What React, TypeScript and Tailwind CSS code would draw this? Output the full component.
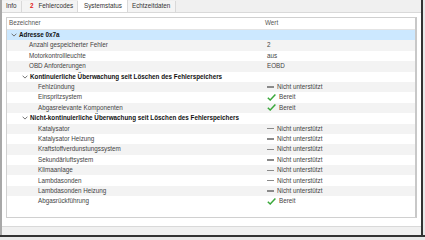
import React from "react";

type Row = {
  label: string;
  level: number;
  kind: "group" | "leaf";
  value?: string;
  status?: "ok" | "na";
  selected?: boolean;
};

const rows: Row[] = [
  { label: "Adresse 0x7a", level: 0, kind: "group", selected: true },
  { label: "Anzahl gespeicherter Fehler", level: 1, kind: "leaf", value: "2" },
  { label: "Motorkontrollleuchte", level: 1, kind: "leaf", value: "aus" },
  { label: "OBD Anforderungen", level: 1, kind: "leaf", value: "EOBD" },
  { label: "Kontinuierliche Überwachung seit Löschen des Fehlerspeichers", level: 1, kind: "group" },
  { label: "Fehlzündung", level: 2, kind: "leaf", status: "na" },
  { label: "Einspritzsystem", level: 2, kind: "leaf", status: "ok" },
  { label: "Abgasrelevante Komponenten", level: 2, kind: "leaf", status: "ok" },
  { label: "Nicht-kontinuierliche Überwachung seit Löschen des Fehlerspeichers", level: 1, kind: "group" },
  { label: "Katalysator", level: 2, kind: "leaf", status: "na" },
  { label: "Katalysator Heizung", level: 2, kind: "leaf", status: "na" },
  { label: "Kraftstoffverdunstungssystem", level: 2, kind: "leaf", status: "na" },
  { label: "Sekundärluftsystem", level: 2, kind: "leaf", status: "na" },
  { label: "Klimaanlage", level: 2, kind: "leaf", status: "na" },
  { label: "Lambdasonden", level: 2, kind: "leaf", status: "na" },
  { label: "Lambdasonden Heizung", level: 2, kind: "leaf", status: "na" },
  { label: "Abgasrückführung", level: 2, kind: "leaf", status: "ok" },
];

function Chevron() {
  return (
    <svg width="6" height="4" viewBox="0 0 6 4" className="shrink-0">
      <path d="M0.6 0.7 L3 3.1 L5.4 0.7" fill="none" stroke="#666" strokeWidth="0.9" />
    </svg>
  );
}

function Check() {
  return (
    <svg width="9" height="7" viewBox="0 0 9 7" className="shrink-0">
      <path d="M0.8 3.8 L3.2 6 L8.4 0.6" fill="none" stroke="#3aa83a" strokeWidth="1.5" />
    </svg>
  );
}

function Dash() {
  return <div className="w-[7px] h-[1.5px] bg-[#8a8a8a] shrink-0" />;
}

function TableRow({ r, i }: { r: Row; i: number }) {
  const bg = r.selected ? "bg-[#cce8ff]" : i % 2 === 1 ? "bg-[#f3f3f3]" : "bg-white";
  const labelPad =
    r.kind === "group"
      ? r.level === 0
        ? "pl-[4px]"
        : "pl-[15px]"
      : r.level === 1
      ? "pl-[22px]"
      : "pl-[31px]";
  return (
    <div className={`flex items-center h-[10.4px] ${bg}`}>
      <div className={`w-[256px] shrink-0 flex items-center whitespace-nowrap overflow-visible ${labelPad}`}>
        {r.kind === "group" && <Chevron />}
        <span
          className={
            r.kind === "group"
              ? "font-bold text-[#111] ml-[2px]"
              : "text-[#444]"
          }
        >
          {r.label}
        </span>
      </div>
      <div className="flex items-center gap-[3px] pl-[4px] text-[#444]">
        {r.value && <span>{r.value}</span>}
        {r.status === "na" && (
          <>
            <Dash />
            <span>Nicht unterstützt</span>
          </>
        )}
        {r.status === "ok" && (
          <>
            <Check />
            <span>Bereit</span>
          </>
        )}
      </div>
    </div>
  );
}

export default function App() {
  return (
    <div
      className="w-[425px] h-[240px] bg-[#f0f0f0] flex flex-col overflow-hidden text-[6.3px] leading-none"
      style={{ fontFamily: "'Liberation Sans', Arial, sans-serif" }}
    >
      <div className="flex flex-1 min-h-0">
        <div className="flex-1 flex flex-col min-w-0 border-l-[2px] border-[#a8a8a8]">
          {/* tabs */}
          <div className="flex h-[12px] items-end text-[#333] shrink-0">
            <div className="h-[11px] w-[20px] flex items-center pl-[4px] bg-[#f4f4f4] border-r border-[#d9d9d9]">Info</div>
            <div className="h-[11px] w-[56px] flex items-center pl-[8px] bg-[#f4f4f4] border-r border-[#d9d9d9]">
              <span className="text-[#e02020] font-bold mr-[5px]">2</span>Fehlercodes
            </div>
            <div className="h-[12px] w-[50px] flex items-center pl-[6px] bg-white border-r border-[#d9d9d9]">Systemstatus</div>
            <div className="h-[11px] w-[48px] flex items-center pl-[4px] bg-[#f4f4f4] border-r border-[#d9d9d9]">Echtzeitdaten</div>
          </div>
          {/* panel */}
          <div className="flex-1 bg-white border-t border-b border-[#d9d9d9] pt-[4px] pl-[4px] pr-[4px] pb-[8px] flex flex-col min-h-0">
            <div className="flex-1 border border-[#d0d0d0] border-r-[2px] border-r-[#c8c8c8] flex flex-col overflow-hidden">
              <div className="flex items-center h-[12px] border-b border-[#e4e4e4] text-[#555] shrink-0">
                <div className="w-[256px] pl-[2px]">Bezeichner</div>
                <div className="pl-[2px]">Wert</div>
              </div>
              {rows.map((r, i) => (
                <TableRow key={i} r={r} i={i} />
              ))}
            </div>
          </div>
          <div className="h-[8px] shrink-0" />
        </div>
        <div className="w-[2px] bg-[#333] shrink-0" />
        <div className="w-[2px] bg-[#e8e8e8] shrink-0" />
      </div>
      <div className="h-[2px] bg-[#333] shrink-0" />
      <div className="h-[3px] bg-[#e8e8e8] shrink-0" />
    </div>
  );
}
